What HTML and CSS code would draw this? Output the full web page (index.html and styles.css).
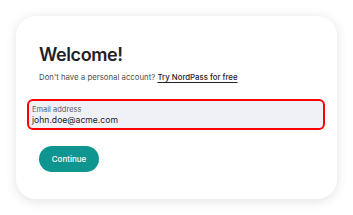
FILE: index.html
```html
<!DOCTYPE html>
<html>
<head>
<meta charset="utf-8">
<link rel="stylesheet" href="styles.css">
</head>
<body>
<div class="card">
  <h1 class="title">Welcome!</h1>
  <p class="sub">Don't have a personal account? <a class="link" href="#">Try NordPass for free</a></p>
  <div class="field">
    <div class="label">Email address</div>
    <div class="value">john.doe@acme.com</div>
  </div>
  <button class="btn">Continue</button>
</div>
</body>
</html>
```
FILE: styles.css
```css
html, body {
  margin: 0;
  padding: 0;
  background: #ffffff;
}
body {
  width: 353px;
  height: 215px;
  padding: 16px;
  box-sizing: border-box;
  font-family: Inter, "Noto Sans", sans-serif;
}
.card {
  width: 321px;
  height: 183px;
  box-sizing: border-box;
  background: #fff;
  border-radius: 20px;
  box-shadow: 0 2px 12px rgba(0, 0, 0, 0.12);
  padding: 27px 12px 0 11px;
  display: flex;
  flex-direction: column;
  align-items: flex-start;
}
.title {
  margin: 0 0 0 12px;
  font-size: 18px;
  line-height: 24px;
  font-weight: 600;
  color: #1f2127;
  letter-spacing: -0.4px;
}
.sub {
  margin: 4px 0 0 12px;
  font-size: 7.8px;
  line-height: 12px;
  color: #4c4f58;
}
.link {
  color: #1f2127;
  font-weight: 500;
  text-decoration: underline;
  text-underline-offset: 1.5px;
}
.field {
  margin-top: 16px;
  width: 298px;
  height: 31px;
  box-sizing: border-box;
  border: 2px solid #ff0000;
  border-radius: 6px;
  background: #eff1f6;
  padding: 4px 0 0 3px;
}
.label {
  font-size: 7.5px;
  line-height: 9px;
  color: #5d606a;
}
.value {
  font-size: 8.6px;
  line-height: 12px;
  color: #1f2127;
}
.btn {
  margin: 16px 0 0 12px;
  width: 60px;
  height: 26px;
  border: none;
  border-radius: 13px;
  background: #0e958f;
  color: #fff;
  font-family: Inter, "Noto Sans", sans-serif;
  font-size: 8px;
  font-weight: 500;
  padding: 0;
}
```
